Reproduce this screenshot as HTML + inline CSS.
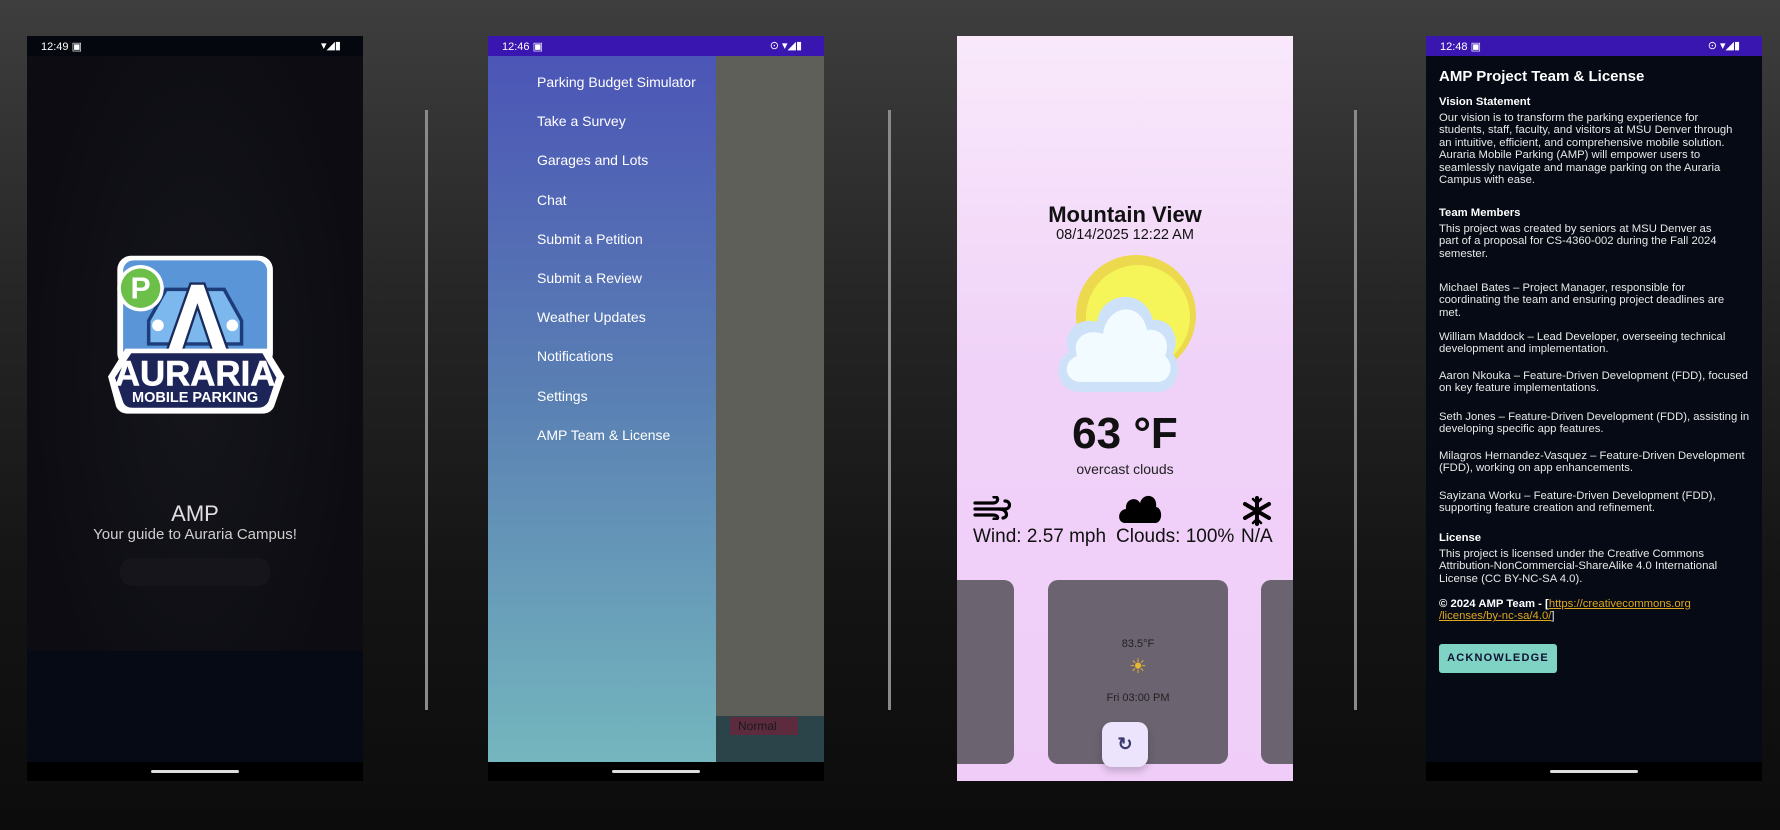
<!DOCTYPE html>
<html><head><meta charset="utf-8"><style>
*{margin:0;padding:0;box-sizing:border-box}
body{width:1780px;height:830px;overflow:hidden;background:linear-gradient(#3e3e3e,#262626 35%,#141414 70%,#0c0c0c);font-family:"Liberation Sans",sans-serif;position:relative}
.ph{position:absolute;top:36px;width:336px;height:745px;overflow:hidden}
.sb{position:absolute;left:0;top:0;width:336px;height:20px;color:#fff;font-size:11px}
.sb .t{position:absolute;left:14px;top:4px}
.nav{position:absolute;left:0;bottom:0;width:336px;height:19px;background:#000}
.nav i{position:absolute;left:124px;top:8px;width:88px;height:3px;border-radius:2px;background:#ddd}
.div{position:absolute;top:110px;width:3px;height:600px;background:#8a8a8a}
.a{position:absolute;white-space:nowrap}
.menu .a{left:49px;color:#fff;font-size:14px}
.p4 .a{left:13px;color:#e8e8e8;font-size:11.3px;line-height:12.4px}
.p4 b{color:#fff}
</style></head><body>
<div class="div" style="left:425px"></div>
<div class="div" style="left:888px"></div>
<div class="div" style="left:1354px"></div>

<!-- Phone 1 -->
<div class="ph" style="left:27px;background:radial-gradient(ellipse at 50% 45%,#15151c,#0c0c12 70%);">
 <div style="position:absolute;left:0;top:615px;width:336px;height:111px;background:#060a14"></div>
 <div class="sb" style="background:#05070f"><span class="t">12:49 ▣</span><span style="position:absolute;right:22px;top:3px">▾◢▮</span></div>
 <svg style="position:absolute;left:52px;top:201px" width="209" height="186" viewBox="0 0 180 160">
  <rect x="33" y="16" width="134" height="96" rx="12" fill="#fff"/>
  <rect x="38" y="20" width="124" height="88" rx="9" fill="#5a95d8"/>
  <path d="M60 72 L75 45 H125 L140 72 V92 H60Z" fill="#7cb8ee" stroke="#1c3c7a" stroke-width="3"/>
  <circle cx="68" cy="76" r="5" fill="#fff"/><circle cx="132" cy="76" r="5" fill="#fff"/>
  <path d="M72 108 L96 40 H108 L132 108 H118 L102 60 L86 108Z" fill="#fff" stroke="#1a2a5a" stroke-width="2"/>
  <circle cx="53" cy="44" r="20" fill="#fff"/><circle cx="53" cy="44" r="17" fill="#6cc04a"/>
  <text x="53" y="53" text-anchor="middle" font-size="26" font-weight="bold" fill="#fff" font-family="Liberation Sans">P</text>
  <path d="M40 96 H162 L177 120 L168 146 Q165 152 158 152 H42 Q35 152 32 146 L25 120Z" fill="#fff"/>
  <path d="M45 100 H158 L170 121 L163 142 Q160 147 154 147 H46 Q40 147 38 142 L31 121Z" fill="#1d2458"/>
  <text x="100" y="128" text-anchor="middle" font-size="30" font-weight="bold" fill="#fff" font-family="Liberation Sans" stroke="#fff" stroke-width="0.5">AURARIA</text>
  <text x="100" y="142" text-anchor="middle" font-size="12.5" font-weight="bold" fill="#fff" font-family="Liberation Sans">MOBILE PARKING</text>
 </svg>
 <div class="a" style="left:0;width:336px;text-align:center;top:465px;color:#e0e0e0;font-size:22px;font-weight:300">AMP</div>
 <div class="a" style="left:0;width:336px;text-align:center;top:490px;color:#cfcfcf;font-size:15px">Your guide to Auraria Campus!</div>
 <div style="position:absolute;left:93px;top:522px;width:150px;height:28px;border-radius:12px;background:#15151b"></div>
 <div class="nav"><i></i></div>
</div>

<!-- Phone 2 -->
<div class="ph menu" style="left:488px;background:#5f5f5a">
 <div style="position:absolute;left:0;top:0;width:228px;height:726px;background:linear-gradient(#4b53b6,#5a80b3 50%,#74b6be)"></div>
 <div style="position:absolute;left:228px;top:680px;width:108px;height:46px;background:#2b444a"></div>
 <div style="position:absolute;left:242px;top:681px;width:68px;height:18px;background:#5c2b3e;color:#1a1a1a;font-size:12px;padding:2px 0 0 8px">Normal</div>
 <div class="sb" style="background:#3a16b0"><span class="t">12:46 ▣</span><span style="position:absolute;right:22px;top:3px">⊙ ▾◢▮</span></div>
 <div class="a" style="top:38px">Parking Budget Simulator</div>
 <div class="a" style="top:77px">Take a Survey</div>
 <div class="a" style="top:116px">Garages and Lots</div>
 <div class="a" style="top:156px">Chat</div>
 <div class="a" style="top:195px">Submit a Petition</div>
 <div class="a" style="top:234px">Submit a Review</div>
 <div class="a" style="top:273px">Weather Updates</div>
 <div class="a" style="top:312px">Notifications</div>
 <div class="a" style="top:352px">Settings</div>
 <div class="a" style="top:391px">AMP Team &amp; License</div>
 <div class="nav"><i></i></div>
</div>

<!-- Phone 3 -->
<div class="ph" style="left:957px;background:linear-gradient(#f9e9fb,#f0d2f8 45%,#efcdf8)">
 <div class="a" style="left:0;width:336px;text-align:center;top:166px;font-size:22px;font-weight:bold;color:#111">Mountain View</div>
 <div class="a" style="left:0;width:336px;text-align:center;top:191px;font-size:14.5px;color:#111">08/14/2025 12:22 AM</div>
 <svg style="position:absolute;left:92px;top:218px" width="150" height="150" viewBox="0 0 150 150">
  <circle cx="87" cy="61" r="60" fill="#ecd94e"/><circle cx="89" cy="63" r="52" fill="#f5f55a"/>
  <path d="M30 138 C8 138 2 108 20 98 C12 78 30 62 48 68 C52 38 95 32 104 66 C122 64 132 84 124 100 C134 112 128 138 110 138Z" fill="#cde2f8"/>
  <path d="M32 128 C16 128 12 108 28 102 C22 84 38 74 54 80 C58 50 92 46 98 76 C114 74 122 88 116 102 C126 110 122 128 108 128Z" fill="#f2fbff"/>
 </svg>
 <div class="a" style="left:0;width:336px;text-align:center;top:373px;font-size:44px;font-weight:bold;color:#111">63 °F</div>
 <div class="a" style="left:0;width:336px;text-align:center;top:425px;font-size:14px;color:#222">overcast clouds</div>
 <svg style="position:absolute;left:16px;top:460px" width="38" height="24" viewBox="0 0 38 24" fill="none" stroke="#000" stroke-width="3.2" stroke-linecap="round">
  <path d="M2 7 H20 C26 7 26 0 21 1"/><path d="M2 13 H32 C38 13 38 5 32 5"/><path d="M2 19 H20 C26 19 26 24 21 23"/><path d="M26 13 C34 13 36 21 30 22"/>
 </svg>
 <svg style="position:absolute;left:160px;top:456px" width="46" height="32" viewBox="0 0 46 32"><path d="M8 31 C0 31 0 18 9 17 C8 7 19 4 23 11 C26 0 41 2 39 15 C46 16 46 31 38 31Z" fill="#000"/></svg>
 <svg style="position:absolute;left:283px;top:460px" width="34" height="30" viewBox="0 0 34 30" stroke="#000" stroke-width="4" stroke-linecap="round">
  <path d="M17 2 V28 M5 8 L29 22 M29 8 L5 22"/><path d="M13 3 L17 7 L21 3 M13 27 L17 23 L21 27" stroke-width="2.5" fill="none"/>
 </svg>
 <div class="a" style="left:16px;top:490px;font-size:19px;color:#111">Wind: 2.57 mph</div>
 <div class="a" style="left:159px;top:490px;font-size:19px;color:#111">Clouds: 100%</div>
 <div class="a" style="left:284px;top:490px;font-size:19px;color:#111">N/A</div>
 <div style="position:absolute;left:-10px;top:544px;width:67px;height:184px;border-radius:10px;background:#6b6370"></div>
 <div style="position:absolute;left:91px;top:544px;width:180px;height:184px;border-radius:10px;background:#6b6370"></div>
 <div style="position:absolute;left:304px;top:544px;width:60px;height:184px;border-radius:10px;background:#6b6370"></div>
 <div class="a" style="left:91px;width:180px;text-align:center;top:602px;font-size:11px;color:#222">83.5°F</div>
 <div class="a" style="left:91px;width:180px;text-align:center;top:618px;font-size:20px;color:#e8b830">☀</div>
 <div class="a" style="left:91px;width:180px;text-align:center;top:656px;font-size:11px;color:#222">Fri 03:00 PM</div>
 <div style="position:absolute;left:145px;top:686px;width:46px;height:45px;border-radius:10px;background:#ece3fc;box-shadow:0 4px 8px rgba(0,0,0,.2);color:#3a3a6a;font-size:18px;text-align:center;line-height:45px;font-weight:bold">↻</div>
</div>

<!-- Phone 4 -->
<div class="ph p4" style="left:1426px;background:#050a14">
 <div class="sb" style="background:#3a16b0"><span class="t">12:48 ▣</span><span style="position:absolute;right:22px;top:3px">⊙ ▾◢▮</span></div>
 <div class="a" style="top:35px;font-size:15px;font-weight:bold;color:#fff">AMP Project Team &amp; License</div>
 <div class="a" style="top:60px"><b>Vision Statement</b></div>
 <div class="a" style="top:76px">Our vision is to transform the parking experience for<br>students, staff, faculty, and visitors at MSU Denver through<br>an intuitive, efficient, and comprehensive mobile solution.<br>Auraria Mobile Parking (AMP) will empower users to<br>seamlessly navigate and manage parking on the Auraria<br>Campus with ease.</div>
 <div class="a" style="top:171px"><b>Team Members</b></div>
 <div class="a" style="top:187px">This project was created by seniors at MSU Denver as<br>part of a proposal for CS-4360-002 during the Fall 2024<br>semester.</div>
 <div class="a" style="top:246px">Michael Bates – Project Manager, responsible for<br>coordinating the team and ensuring project deadlines are<br>met.</div>
 <div class="a" style="top:295px">William Maddock – Lead Developer, overseeing technical<br>development and implementation.</div>
 <div class="a" style="top:334px">Aaron Nkouka – Feature-Driven Development (FDD), focused<br>on key feature implementations.</div>
 <div class="a" style="top:375px">Seth Jones – Feature-Driven Development (FDD), assisting in<br>developing specific app features.</div>
 <div class="a" style="top:414px">Milagros Hernandez-Vasquez – Feature-Driven Development<br>(FDD), working on app enhancements.</div>
 <div class="a" style="top:454px">Sayizana Worku – Feature-Driven Development (FDD),<br>supporting feature creation and refinement.</div>
 <div class="a" style="top:496px"><b>License</b></div>
 <div class="a" style="top:512px">This project is licensed under the Creative Commons<br>Attribution-NonCommercial-ShareAlike 4.0 International<br>License (CC BY-NC-SA 4.0).</div>
 <div class="a" style="top:562px"><b>© 2024 AMP Team - [</b><u style="color:#e0a820">https://creativecommons.org</u><br><u style="color:#e0a820">/licenses/by-nc-sa/4.0/</u>]</div>
 <div style="position:absolute;left:13px;top:608px;width:118px;height:29px;border-radius:3px;background:#7fd3c4;color:#113;font-size:11px;font-weight:bold;letter-spacing:1.2px;text-align:center;line-height:29px">ACKNOWLEDGE</div>
 <div class="nav"><i></i></div>
</div>
</body></html>
